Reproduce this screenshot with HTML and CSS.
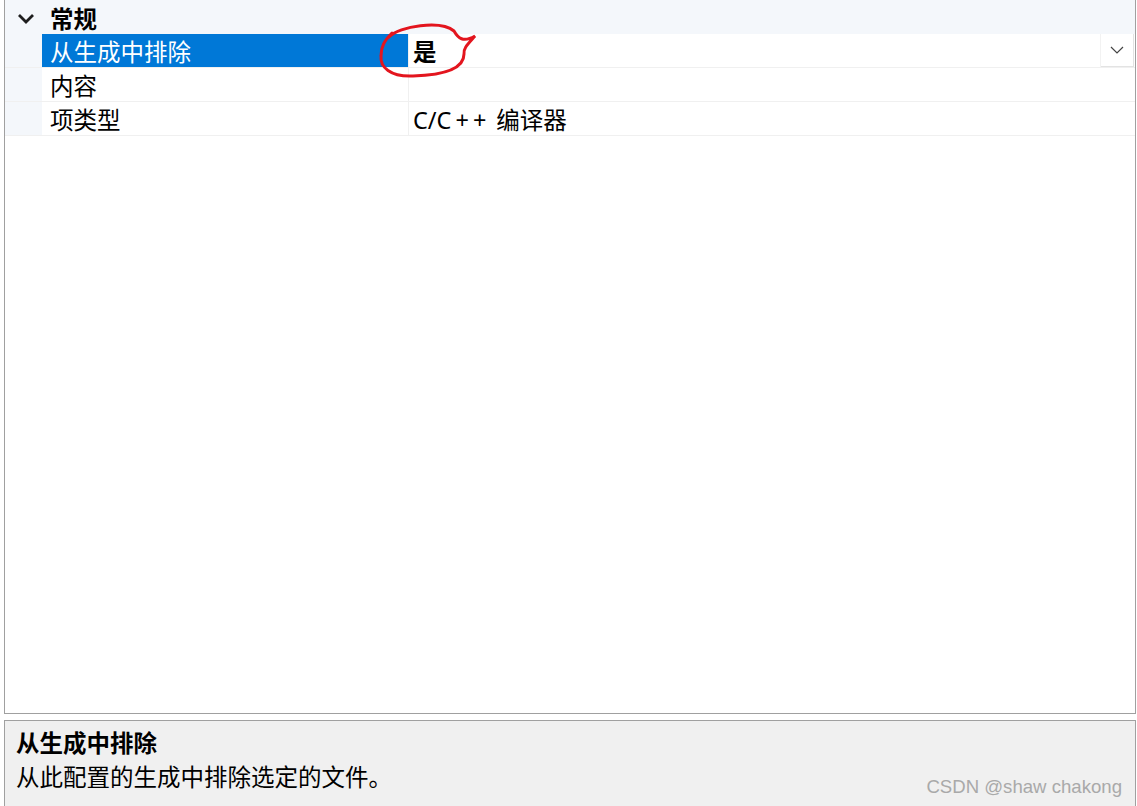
FILE: index.html
```html
<!DOCTYPE html>
<html lang="zh-CN">
<head>
    <meta charset="UTF-8">
    <title>属性</title>
    <link rel="stylesheet" href="styles.css">
</head>
<body>
    <!-- 属性网格 -->
    <div class="grid-panel">
        <div class="category">
            <span class="cat-toggle">
                <svg width="18" height="11" viewBox="0 0 18 11"><path d="M2 2 L9 9 L16 2" fill="none" stroke="#1e1e1e" stroke-width="2.8"/></svg>
            </span>
            <span class="cat-name">常规</span>
        </div>

        <div class="prop-row selected">
            <div class="gutter"></div>
            <div class="prop-name">从生成中排除</div>
            <div class="prop-value bold">
                <span>是</span>
                <span class="drop-btn">
                    <svg width="14" height="8" viewBox="0 0 14 8"><path d="M1 1 L7 7 L13 1" fill="none" stroke="#444" stroke-width="1.2"/></svg>
                </span>
            </div>
        </div>
        <div class="prop-row">
            <div class="gutter"></div>
            <div class="prop-name">内容</div>
            <div class="prop-value"></div>
        </div>
        <div class="prop-row">
            <div class="gutter"></div>
            <div class="prop-name">项类型</div>
            <div class="prop-value"><span>C/C<span class="plus">++</span>编译器</span></div>
        </div>

        <!-- 手绘红圈标注 -->
        <svg class="mark" width="1137" height="100" viewBox="0 0 1137 100">
            <path d="M388 37 C 398 26, 440 20, 453 31 C 457 38, 462 43, 474 36 C 468 43, 462 48, 463 54 C 463 68, 445 75, 412 76 C 389 77, 379 67, 380 56 C 380 47, 383 41, 391 33" fill="none" stroke="#e3151e" stroke-width="3" stroke-linecap="round"/>
        </svg>
    </div>

    <!-- 说明区 -->
    <div class="desc-panel">
        <div class="desc-title">从生成中排除</div>
        <div class="desc-text">从此配置的生成中排除选定的文件。</div>
        <div class="watermark">CSDN @shaw chakong</div>
    </div>
</body>
</html>
```

FILE: styles.css
```css
* {
    margin: 0;
    padding: 0;
    box-sizing: border-box;
}

body {
    font-family: "Noto Sans", "Noto Sans CJK SC", sans-serif;
    font-size: 23.5px;
    color: #000;
    background: #fff;
    padding-left: 4px;
    padding-right: 1px;
    height: 806px;
    overflow: hidden;
}

/* 属性网格 */
.grid-panel {
    position: relative;
    height: 714px;
    border: 1px solid #a0a0a0;
    border-top: none;
    background: #fff;
}

.category {
    display: flex;
    align-items: center;
    height: 34px;
    padding-top: 2px;
    background: #f4f7fb;
}

.cat-toggle {
    width: 37px;
    display: flex;
    justify-content: center;
    padding-left: 4px;
}

.cat-name {
    font-weight: bold;
    padding-left: 8px;
}

.prop-row {
    display: flex;
    height: 34px;
    border-bottom: 1px solid #f0f0f0;
}

.gutter {
    width: 37px;
    background: #f4f7fb;
}

.prop-name {
    width: 367px;
    padding: 4px 0 0 8px;
    line-height: 29px;
    border-right: 1px solid #f0f0f0;
}

.prop-row.selected .prop-name {
    background: #0078d7;
    color: #fff;
}

.prop-value {
    flex: 1;
    display: flex;
    justify-content: space-between;
    align-items: center;
    padding-left: 4px;
    line-height: 29px;
}

.prop-value > span:first-child {
    padding-top: 4px;
}

/* 加号间距略宽 */
.plus {
    letter-spacing: 4px;
    margin-left: 4px;
    margin-right: 6px;
}

.bold {
    font-weight: bold;
}

.drop-btn {
    width: 33px;
    height: 33px;
    margin-right: 1px;
    display: flex;
    align-items: center;
    justify-content: center;
    background: #fff;
    border-right: 1px solid #e3e3e3;
    border-bottom: 1px solid #e3e3e3;
    box-shadow: -1px 0 0 #f2f2f2;
}

.mark {
    position: absolute;
    left: -4px;
    top: 0;
    pointer-events: none;
}

/* 说明区 */
.desc-panel {
    position: relative;
    margin-top: 6px;
    height: 100px;
    border: 1px solid #a0a0a0;
    background: #f0f0f0;
    padding: 5px 0 0 11px;
}

.desc-title {
    font-weight: bold;
    line-height: 34px;
}

.desc-text {
    line-height: 34px;
}

.watermark {
    position: absolute;
    right: 13px;
    top: 55px;
    font-family: "Liberation Sans", sans-serif;
    font-size: 18.6px;
    color: #a9a9a9;
}
```
